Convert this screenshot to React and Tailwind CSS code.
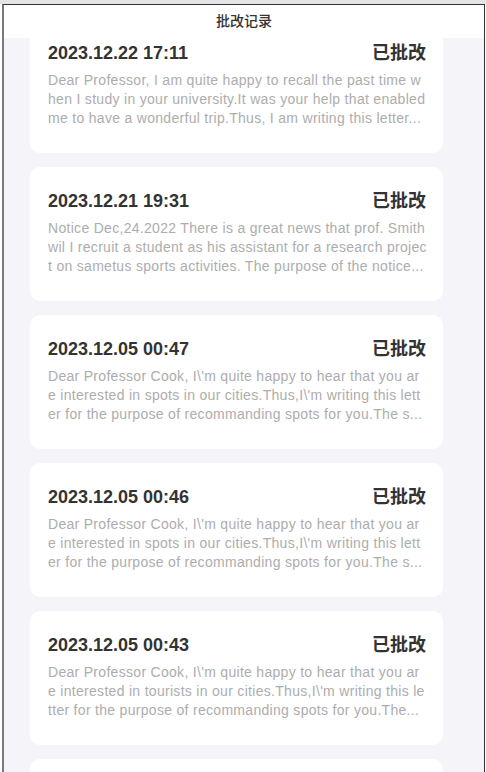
import React from 'react';

const cook = [
  "Dear Professor Cook, I\\'m quite happy to hear that you ar",
  "e interested in spots in our cities.Thus,I\\'m writing this lett",
  'er for the purpose of recommanding spots for you.The s...',
];

const records = [
  {
    time: '2023.12.22 17:11',
    lines: [
      'Dear Professor, I am quite happy to recall the past time w',
      'hen I study in your university.It was your help that enabled',
      'me to have a wonderful trip.Thus, I am writing this letter...',
    ],
  },
  {
    time: '2023.12.21 19:31',
    lines: [
      'Notice Dec,24.2022 There is a great news that prof. Smith',
      'wil I recruit a student as his assistant for a research projec',
      't on sametus sports activities. The purpose of the notice...',
    ],
  },
  { time: '2023.12.05 00:47', lines: cook },
  { time: '2023.12.05 00:46', lines: cook },
  {
    time: '2023.12.05 00:43',
    lines: [
      "Dear Professor Cook, I\\'m quite happy to hear that you ar",
      "e interested in tourists in our cities.Thus,I\\'m writing this le",
      'tter for the purpose of recommanding spots for you.The...',
    ],
  },
  { time: '2023.12.05 00:41', lines: cook },
];

function RecordCard({ time, lines }) {
  return (
    <div className="w-[413px] shrink-0 rounded-[10px] bg-white pt-[22px] pb-[25px] pl-[18px] pr-[17px]">
      <div className="flex items-center justify-between leading-6">
        <span className="text-[18px] font-bold text-[#333]">{time}</span>
        <span className="text-[18px] font-bold text-[#333]">已批改</span>
      </div>
      <p className="mt-[6px] text-[14px] tracking-[0.3px] leading-[19px] text-[#adadad]">
        {lines.map((l, i) => (
          <span key={i} className="block whitespace-nowrap">{l}</span>
        ))}
      </p>
    </div>
  );
}

export default function App() {
  return (
    <div
      className="w-[486px] h-[772px] overflow-hidden bg-white flex flex-col"
      style={{ fontFamily: '"Liberation Sans", "Noto Sans CJK SC", sans-serif' }}
    >
      <div className="h-[4px] shrink-0 bg-[#e4e4e4]" />
      <div className="flex-1 min-h-0 flex flex-col ml-[2px] mr-[1px] border-t border-t-[#333] border-l-2 border-l-[#7a7a7a] border-r border-r-[#333]">
        {/* header */}
        <div className="h-[33px] shrink-0 bg-white flex items-center justify-center">
          <span className="text-[14px] font-medium text-[#333]">批改记录</span>
        </div>

        {/* list, scrolled a bit */}
        <div className="flex-1 min-h-0 overflow-hidden bg-[#f5f5f9] pl-[26px]">
          <div className="-mt-[19px] flex flex-col gap-[14px]">
            {records.map((r) => (
              <RecordCard key={r.time} time={r.time} lines={r.lines} />
            ))}
          </div>
        </div>
      </div>
    </div>
  );
}
